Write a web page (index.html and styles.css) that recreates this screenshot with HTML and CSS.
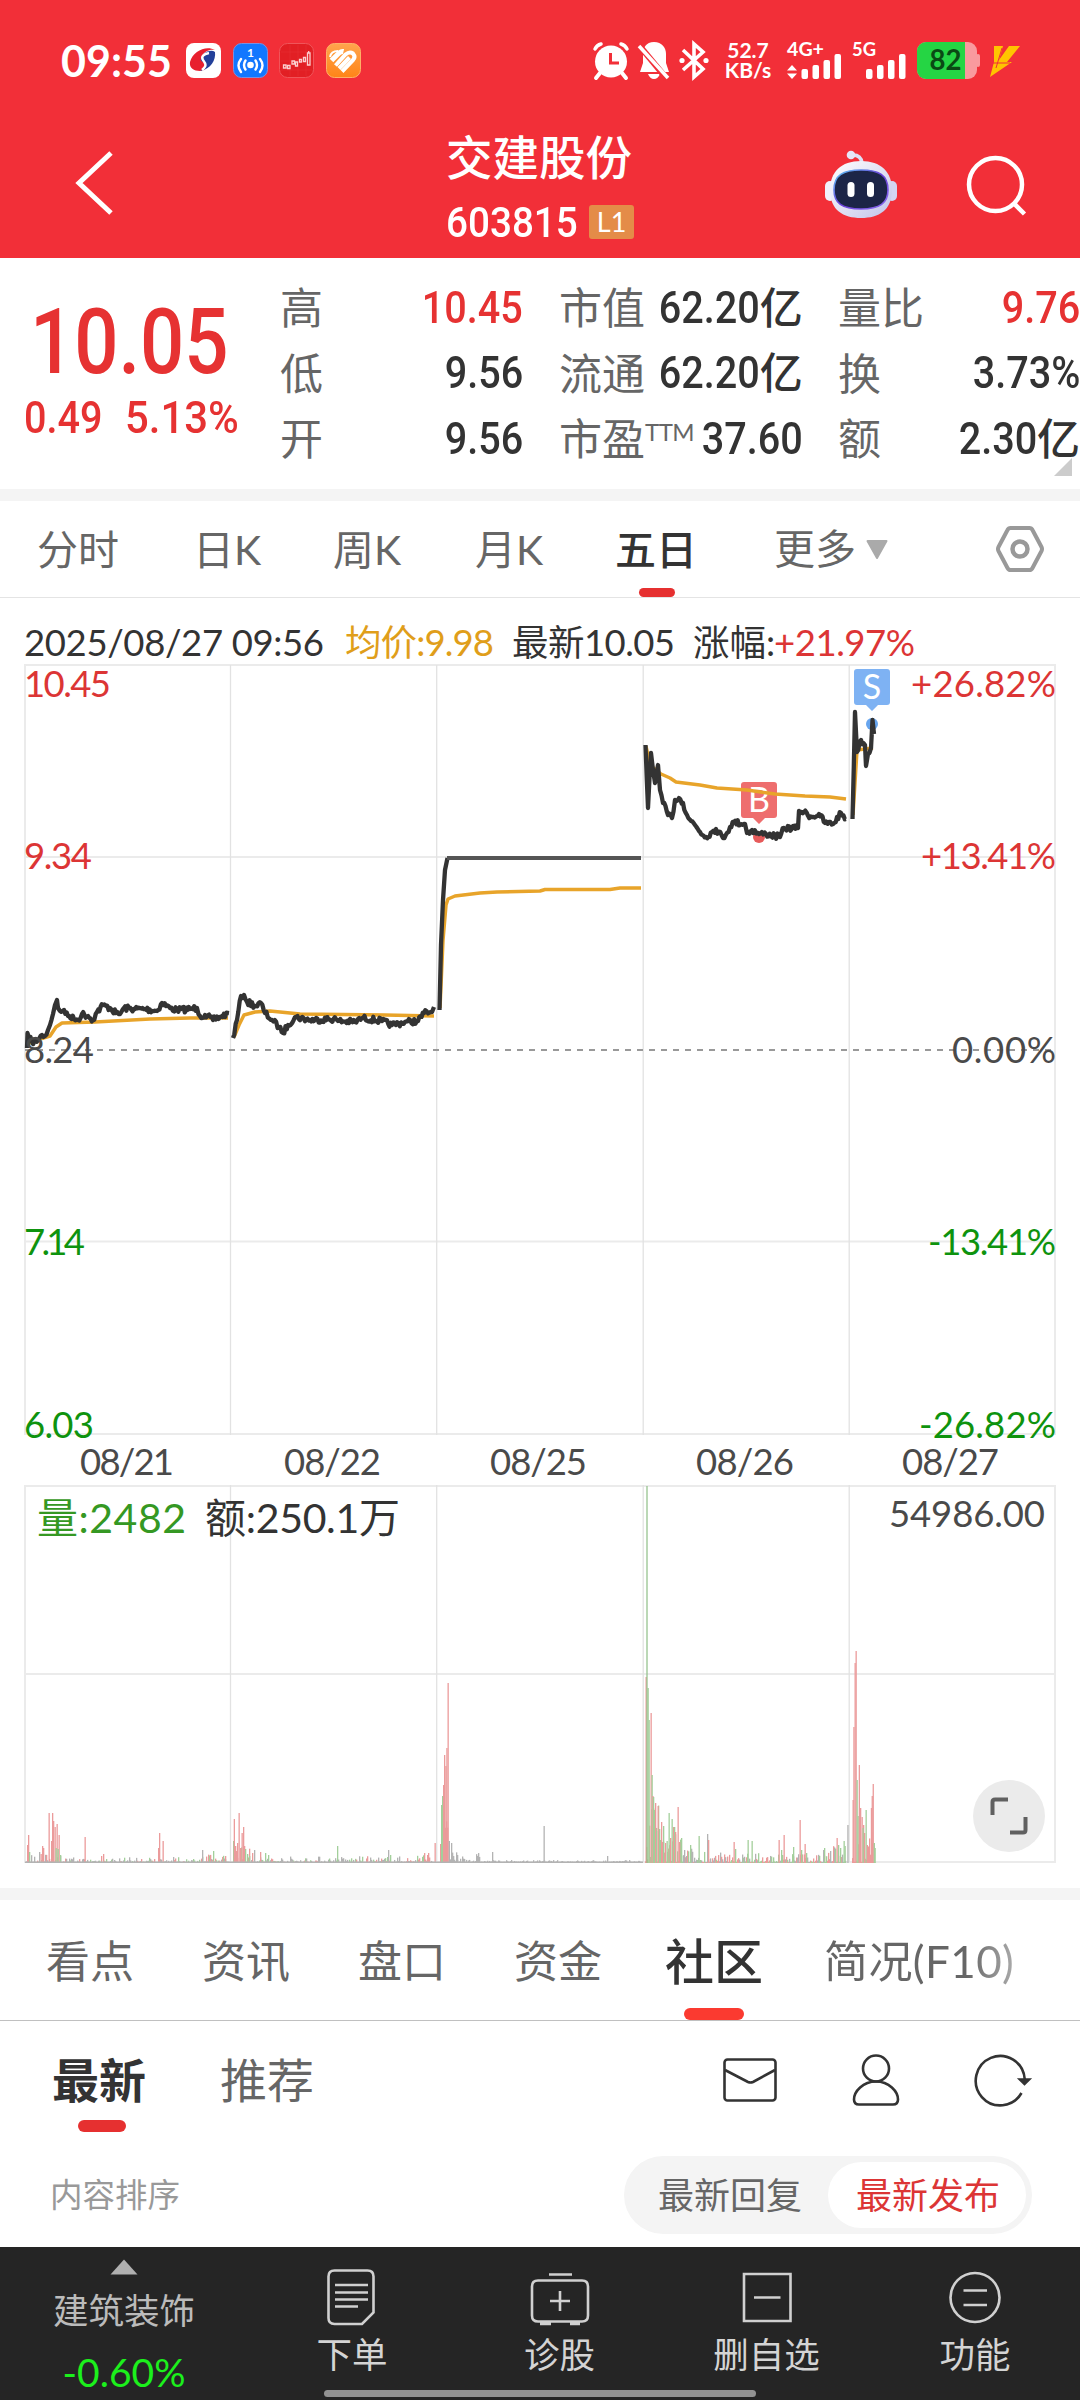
FILE: index.html
```html
<!DOCTYPE html>
<html lang="zh-CN">
<head>
<meta charset="utf-8">
<title>交建股份 603815</title>
<link rel="stylesheet" href="styles.css">
</head>
<body>
<div class="screen">
  <header class="top">
    <div class="status">
      <span class="clock">09:55</span>
      <div class="apps">
        <svg width="35" height="35" viewBox="0 0 35 35"><rect width="35" height="35" rx="8" fill="#fff"/><path d="M29 7C20 2 7 8 4 19c-1 6 4 9 10 9 6-1 8-4 6-7-2-3-6-4-4-8 2-4 7-7 13-6z" fill="#e8202e"/><path d="M15 15c2-6 10-9 14-6 1 8-4 17-15 19 5-4 7-5 4-8-2-2-4-2-3-5z" fill="#23409a"/><path d="M23 10c-6 1-8 4-6 7 3 4 4 6-1 10" fill="none" stroke="#fff" stroke-width="2.4"/></svg>
        <svg width="35" height="35" viewBox="0 0 35 35"><rect x=".5" y=".5" width="34" height="34" rx="8" fill="#1277ff" stroke="#7b8fe0"/><text x="17.5" y="13.500" text-anchor="middle" class="app-num">1</text><circle cx="17.500" cy="22" r="3.300" fill="#fff"/><path d="M12.500 17.500q-3 4.500 0 9M22.500 17.500q3 4.500 0 9M8 16q-5 6.500 0 13M27 16q5 6.500 0 13" fill="none" stroke="#fff" stroke-width="2.400" stroke-linecap="round"/></svg>
        <svg width="35" height="35" viewBox="0 0 35 35"><rect x=".5" y=".5" width="34" height="34" rx="8" fill="#e21f24" stroke="#f0555a"/><path d="M2 9h31M2 18h31M2 27h31M11 2v31M19 2v31M27 2v31" stroke="#e62c30" stroke-width=".8"/><path d="M4.500 22h2.500v3H4.500zM8.500 22.500h2.500v3H8.500zM13 18h2.500v3H13zM16.500 19h2v4h-2zM20.500 16.500h2v2.500h-2zM24.500 14.500h2v4h-2zM28.500 10h2.500v12h-2.500zM29.700 8v2" fill="none" stroke="#fbd0d0" stroke-width="1.300"/></svg>
        <svg width="35" height="35" viewBox="0 0 35 35"><defs><linearGradient id="og" x2="0" y2="1"><stop stop-color="#ffa54d"/><stop offset="1" stop-color="#ff8418"/></linearGradient></defs><rect x=".5" y=".5" width="34" height="34" rx="8" fill="url(#og)" stroke="#ffb066"/><g stroke="#fff" stroke-width="4" fill="none"><path d="M5.500 17.500 13 10q2.500-2 4.500-1.500" stroke-width="5"/><path d="M4 14q1-6 8-6" stroke-width="2"/><path d="M9.500 22.500 19.500 11.500q4-3.500 7.500-1 3 3.500 0 6.500L16 28.500"/><path d="M13 25.500 23.500 14.500"/></g></svg>
      </div>
      <div class="sys">
        <svg width="36" height="37" viewBox="0 0 36 37"><circle cx="18" cy="19.500" r="16" fill="#fff"/><path d="M2 7q2-4 6-5M34 7q-2-4-6-5" stroke="#fff" stroke-width="3.500" fill="none" stroke-linecap="round"/><path d="M7 31l-4 5M29 31l4 5" stroke="#fff" stroke-width="4" stroke-linecap="round"/><path d="M17.500 11v10h8.500" stroke="#f22f38" stroke-width="3" fill="none"/></svg>
        <svg width="32" height="37" viewBox="0 0 32 37"><path d="M16 0c8 0 12 6 12 12v9l3 9H2l3-9v-9C5 6 8 0 16 0zM10 32h12q-2 5-6 5t-6-5z" fill="#fff"/><path d="M0 2 29 37" stroke="#f22f38" stroke-width="6"/><path d="M1 4 30 36" stroke="#fff" stroke-width="3.500"/></svg>
        <svg width="30" height="37" viewBox="0 0 30 37"><path d="M4 8l20 19-9 8V2l9 8L4 28" fill="none" stroke="#fff" stroke-width="3.600"/><circle cx="3" cy="18.500" r="2.600" fill="#fff"/><circle cx="27" cy="18.500" r="2.600" fill="#fff"/></svg>
        <div class="speed"><span>52.7</span><span>KB/s</span></div>
        <svg class="cell" width="56" height="37" viewBox="0 0 56 37"><text x="0" y="14" textLength="37" lengthAdjust="spacingAndGlyphs">4G+</text><path d="M0 28.500l5-5.500 5 5.500zM0 31.500l5 5.500 5-5.500z" fill="#fff"/><g fill="#fff"><rect x="14.500" y="27" width="6.500" height="10" rx="2"/><rect x="25.500" y="23" width="6.500" height="14" rx="2"/><rect x="36.500" y="18" width="6.500" height="19" rx="2"/><rect x="47.500" y="12" width="6.500" height="25" rx="2"/></g></svg>
        <svg class="cell" width="56" height="37" viewBox="0 0 56 37"><text x="0" y="14" textLength="24" lengthAdjust="spacingAndGlyphs">5G</text><g fill="#fff"><rect x="14" y="27" width="6.500" height="10" rx="2"/><rect x="25" y="23" width="6.500" height="14" rx="2"/><rect x="36" y="18" width="6.500" height="19" rx="2"/><rect x="47" y="12" width="6.500" height="25" rx="2"/></g></svg>
        <svg class="cell" width="64" height="37" viewBox="0 0 64 37"><defs><clipPath id="bc"><rect width="60" height="37" rx="9"/></clipPath></defs><g clip-path="url(#bc)"><rect width="60" height="37" fill="#f99a9e"/><rect width="48" height="37" fill="#25d544"/></g><rect x="59" y="12" width="4" height="13" rx="2" fill="#f99a9e"/><text x="12.500" y="28" textLength="32" lengthAdjust="spacingAndGlyphs" class="batt">82</text></svg>
        <svg width="30" height="37" viewBox="0 0 30 37"><path d="M4 4h9L9 18l10-14h11L17 20h5L0 35 4 20z" fill="#ffc400"/><path d="M2 21h18M12 6l-6 20" stroke="#f22f38" stroke-width="1"/></svg>
      </div>
    </div>
    <div class="titlebar">
      <svg class="back" width="38" height="66" viewBox="0 0 38 66"><path d="M35 3 3 33l32 30" fill="none" stroke="#fff" stroke-width="5"/></svg>
      <div class="name">
        <h1>交建股份</h1>
        <div class="code"><span class="din">603815</span><em>L1</em></div>
      </div>
      <svg class="robot" width="74" height="70" viewBox="0 0 74 70"><defs><linearGradient id="rb" x2="1" y2="1"><stop stop-color="#fff"/><stop offset=".6" stop-color="#dcdcf2"/><stop offset="1" stop-color="#bfc3ea"/></linearGradient><linearGradient id="rs" x2="1" y2="1"><stop stop-color="#5cc8f5"/><stop offset=".5" stop-color="#6a3fd8"/><stop offset="1" stop-color="#8a6cf0"/></linearGradient></defs><path d="M27 5q10-1 11 8" fill="none" stroke="#dfe0f5" stroke-width="3.500"/><circle cx="27" cy="5" r="4.300" fill="#e6e6f8"/><rect x="1" y="31" width="10" height="20" rx="5" fill="#f1f1fb"/><rect x="63" y="31" width="10" height="20" rx="5" fill="#d3d5f2"/><path d="M37 11c20 0 31 11 31 29 0 20-13 28-31 28S6 60 6 40c0-18 11-29 31-29z" fill="url(#rb)"/><path d="M37 20c18 0 27 5 27 20 0 13-8 19-27 19S10 53 10 40c0-15 9-20 27-20z" fill="#1c2547" stroke="url(#rs)" stroke-width="1.600"/><rect x="23.500" y="32" width="7" height="15" rx="3.500" fill="#fff"/><rect x="43" y="32" width="7" height="15" rx="3.500" fill="#fff"/></svg>
      <svg class="search" width="62" height="62" viewBox="0 0 62 62"><circle cx="29.500" cy="29.500" r="26.500" fill="none" stroke="#fff" stroke-width="4.500"/><path d="M47.500 48 58.500 59" stroke="#fff" stroke-width="4.500"/></svg>
    </div>
  </header>

  <section class="quote">
    <div class="price">
      <div class="now"><span class="din">10.05</span></div>
      <div class="chg"><span class="din">0.49</span><span class="din">5.13%</span></div>
    </div>
    <dl class="stats s1">
      <dt>高</dt><dd class="red"><span class="din">10.45</span></dd>
      <dt>低</dt><dd><span class="din">9.56</span></dd>
      <dt>开</dt><dd><span class="din">9.56</span></dd>
    </dl>
    <dl class="stats s2">
      <dt>市值</dt><dd><span class="din">62.20</span>亿</dd>
      <dt>流通</dt><dd><span class="din">62.20</span>亿</dd>
      <dt>市盈<sup>TTM</sup></dt><dd><span class="din">37.60</span></dd>
    </dl>
    <dl class="stats s3">
      <dt>量比</dt><dd class="red"><span class="din">9.76</span></dd>
      <dt>换</dt><dd><span class="din">3.73%</span></dd>
      <dt>额</dt><dd><span class="din">2.30</span>亿</dd>
    </dl>
    <i class="corner"></i>
  </section>

  <nav class="periods">
    <span>分时</span><span>日K</span><span>周K</span><span>月K</span><span class="on">五日</span>
    <span class="more">更多<svg width="22" height="19" viewBox="0 0 22 19"><path d="M1.500 1h19L11 18z" fill="#aaa" stroke="#aaa" stroke-width="2" stroke-linejoin="round"/></svg></span>
    <svg width="50" height="48" viewBox="0 0 50 48"><path d="M15.500 3h19q2 0 3 2l9 17q1 2 0 4l-9 17q-1 2-3 2h-19q-2 0-3-2l-9-17q-1-2 0-4l9-17q1-2 3-2z" fill="none" stroke="#999" stroke-width="4"/><circle cx="25" cy="24" r="7.500" fill="none" stroke="#999" stroke-width="4.500"/></svg>
  </nav>

  <section class="chart">
    <svg id="chart" width="1080" height="1290" viewBox="0 598 1080 1290">
      <g class="info">
        <text x="24" y="656" textLength="300">2025/08/27 09:56</text>
        <text class="gold" x="345" y="656" textLength="149">均价:9.98</text>
        <text x="512" y="656" textLength="163">最新10.05</text>
        <text x="693" y="656" textLength="82">涨幅:</text>
        <text class="up" x="774" y="656" textLength="141">+21.97%</text>
      </g>
      <g fill="none" stroke="#ebebeb" stroke-width="2">
        <path d="M25 665H1055V1434H25zM25 857H1055M25 1241.500H1055M25 1486H1055V1862H25zM25 1674H1055"/>
        <path stroke="#e2e2e2" stroke-width="1.300" d="M230.500 665V1435M436.700 665V1435M643.200 665V1435M849.200 665V1435M230.500 1485V1862M436.700 1485V1862M643.200 1485V1862M849.200 1485V1862"/>
      </g>
      <path d="M25 1050H1055" stroke="#999" stroke-width="2" stroke-dasharray="6 6"/>
      <g id="bars"></g>
      <circle cx="872" cy="724" r="6" fill="#67a5ee"/>
      <circle cx="759" cy="837" r="6" fill="#e65a5a"/>
      <path d="M744 782h30q3 0 3 3v30q0 3-3 3h-9l-6 6-6-6h-9q-3 0-3-3v-30q0-3 3-3z" fill="#ee6e6e"/>
      <path d="M857 669h30q3 0 3 3v30q0 3-3 3h-9l-6 6-6-6h-9q-3 0-3-3v-30q0-3 3-3z" fill="#7eb2f3"/>
      <g class="flag"><text x="759" y="811.500">B</text><text x="872" y="698.500">S</text></g>
      <g id="avg" class="avg"></g>
      <g id="px" class="px"></g>
      <g class="axis">
        <g class="up"><text x="24" y="697" textLength="87">10.45</text><text x="24" y="869" textLength="68">9.34</text></g>
        <text x="24" y="1062.500" textLength="70">8.24</text>
        <g class="down"><text x="24" y="1254.500" textLength="61">7.14</text><text x="24" y="1438" textLength="70">6.03</text></g>
        <g class="up"><text x="911" y="697" textLength="145">+26.82%</text><text x="921" y="869" textLength="135">+13.41%</text></g>
        <text x="952" y="1062.500" textLength="104">0.00%</text>
        <g class="down"><text x="928" y="1254.500" textLength="128">-13.41%</text><text x="919" y="1438" textLength="137">-26.82%</text></g>
        <text x="80" y="1475" textLength="94">08/21</text><text x="284" y="1475" textLength="97">08/22</text><text x="490" y="1475" textLength="97">08/25</text><text x="696" y="1475" textLength="98">08/26</text><text x="902" y="1475" textLength="97">08/27</text>
        <text x="889" y="1527" textLength="156">54986.00</text>
      </g>
      <g class="vol"><text class="grn" x="37" y="1533" textLength="149">量:2482</text><text x="205" y="1533" textLength="195">额:250.1万</text></g>
      <circle cx="1009" cy="1816" r="36" fill="#ebebeb"/>
      <path d="M992.500 1815v-13q0-2.500 2.500-2.500h13M1025.500 1817v13q0 2.500-2.500 2.500h-13" fill="none" stroke="#606060" stroke-width="4"/>
    </svg>
  </section>

  <nav class="sections">
    <span>看点</span><span>资讯</span><span>盘口</span><span>资金</span><span class="on">社区</span><span class="fade">简况(F10)</span>
  </nav>

  <section class="feed">
    <div class="feed-head">
      <span class="on">最新</span><span>推荐</span>
      <div class="tools">
        <svg width="54" height="52" viewBox="0 0 54 52"><rect x="1.500" y="5.500" width="51" height="41" rx="3"/><path d="M2 16 25 28q2.500 1 5 0L52 16"/></svg>
        <svg width="48" height="52" viewBox="0 0 48 52"><circle cx="24" cy="14.500" r="13"/><path d="M24 27.500c-13 0-22 10-22 18 0 4 2 5 5 5h34c3 0 5-1 5-5 0-8-9-18-22-18z"/></svg>
        <svg width="56" height="52" viewBox="0 0 56 52"><path d="M46.500 39A24.500 24.700 0 1 1 49.700 25"/><path d="M45 25.500h9l-4.500 4.500z" fill="#333"/></svg>
      </div>
    </div>
    <div class="sort">
      <span class="label">内容排序</span>
      <div class="seg"><span>最新回复</span><span class="on">最新发布</span></div>
    </div>
  </section>

  <footer class="bar">
    <div class="industry"><svg width="28" height="16" viewBox="0 0 28 16"><path d="M14 .5 27.500 15.500H.5z" fill="#b0b0b0"/></svg><span>建筑装饰</span><b>-0.60%</b></div>
    <div class="item"><svg width="60" height="58" viewBox="0 0 60 58"><path d="M12.500 2.500h33q6 0 6 6v36L40 56H12.500q-6 0-6-6V8.500q0-6 6-6z" /><path d="M13 17h33M13 24.500h33M13 31.500h33M13 38.500h23"/></svg><span>下单</span></div>
    <div class="item"><svg width="60" height="58" viewBox="0 0 60 58"><path d="M8 12.500h44q6 0 6 6v29q0 6-6 6H8q-6 0-6-6v-29q0-6 6-6zM19 6.500h23M30 23v20M20 33h20"/><path d="M10 55.500h11M40 55.500h10" stroke-width="3.500"/></svg><span>诊股</span></div>
    <div class="item"><svg width="60" height="58" viewBox="0 0 60 58"><path d="M7 6h46.500v47H7zM17 29.500h26.500"/></svg><span>删自选</span></div>
    <div class="item"><svg width="60" height="58" viewBox="0 0 60 58"><circle cx="30" cy="29.500" r="24.500"/><path d="M18.500 22.500H42M18.500 37H42"/></svg><span>功能</span></div>
    <i class="home"></i>
  </footer>
</div>
<script src="chart.js"></script>
</body>
</html>
```
FILE: styles.css
```css
* { box-sizing: border-box; }
body, h1, dl, dd, dt { margin: 0; }
body { width: 1080px; background: #fff; color: #333; font-family: Lato, "Noto Sans CJK SC", sans-serif; }
svg { display: block; flex: none; overflow: visible; }
span, dt, dd, text { white-space: nowrap; }
.screen { width: 1080px; height: 2400px; display: flex; flex-direction: column; overflow: hidden; }
.din { display: inline-block; font-family: Roboto, sans-serif; font-weight: 500; transform: scaleX(.88); transform-origin: left; }
.red { color: #e63232; }

.top { height: 258px; background: #f22f38; color: #fff; display: flex; flex-direction: column; }
.status { height: 120px; padding: 0 60px; display: flex; align-items: center; }
.clock { width: 126px; font-size: 43px; font-weight: 700; line-height: 35px; padding-left: 1px; }
.apps { display: flex; gap: 11.500px; }
.app-num { fill: #fff; font-size: 12px; font-weight: 700; }
.sys { margin-left: auto; display: flex; align-items: center; gap: 9px; }
.speed { width: 48px; margin: 0 6px 0 6px; display: flex; flex-direction: column; align-items: center; font-size: 21px; line-height: 20px; font-weight: 700; }
.cell text { fill: #fff; font-size: 18px; font-weight: 700; }
.cell .batt { fill: #0a4a14; font-size: 28px; }
.titlebar { height: 138px; position: relative; display: flex; justify-content: center; }
.back { position: absolute; left: 76px; top: 30px; }
.robot { position: absolute; left: 824px; top: 30px; }
.search { position: absolute; left: 966px; top: 35px; }
.name { width: 188px; padding-top: 9px; }
h1 { font-size: 46.500px; font-weight: 500; line-height: 56px; }
.code { display: flex; align-items: center; height: 36px; margin-top: 19px; font-size: 42px; }
.code .din { width: 144px; transform: scaleX(.92); }
.code em { width: 45px; height: 34px; border-radius: 3px; background: #e48c48; font-style: normal; font-size: 27px; line-height: 34px; text-align: center; }

.quote { height: 231px; position: relative; display: flex; line-height: 66px; font-size: 43px; }
.price { width: 280px; padding: 30px 0 0 24px; color: #e63232; }
.now { font-size: 90px; line-height: 100px; padding-left: 6px; }
.now .din { transform: scaleX(.865); }
.chg { font-size: 45px; line-height: 50px; display: flex; }
.chg .din:first-child { width: 101px; }
.chg .din:last-child { transform: scaleX(.93); }
.stats { display: grid; grid-template-columns: auto auto; grid-template-rows: repeat(3, 65.500px); justify-content: space-between; padding-top: 17px; }
.stats dt { color: #666; }
.stats dd { display: flex; justify-content: flex-end; align-items: center; font-weight: 500; }
.stats .din { font-size: 45px; transform-origin: right; }
.s1 { width: 243px; }
.s2 { width: 242px; margin-left: 36px; }
.s3 { width: 242px; margin-left: 37px; }
.stats sup { display: inline-block; width: 0; font-size: 24px; line-height: 0; vertical-align: 14px; letter-spacing: -.5px; }
.corner { position: absolute; right: 8px; top: 200px; border: 9px solid #ccc; border-top-color: transparent; border-left-color: transparent; }

.periods { height: 109px; border-top: 12px solid #f4f4f4; border-bottom: 1px solid #e4e4e4; padding-left: 37px; display: grid; grid-template-columns: 156px 140px 142px 140px 159px 221px 50px; align-items: center; font-size: 41px; color: #666; }
.periods span { position: relative; line-height: 98px; height: 96px; }
.periods .on { color: #333; font-weight: 500; }
.periods .on::after, .sections .on::after, .feed-head .on::after { content: ""; position: absolute; border-radius: 6px; background: #e63030; }
.periods .on::after { left: 24px; bottom: 0; width: 36px; height: 9px; }
.periods .more { display: flex; align-items: center; gap: 10px; }

.chart { height: 1290px; }
.chart text { fill: #333; }
.info text, .axis text { font-size: 36.500px; }
.axis text { fill: #4a4a4a; }
.vol text { font-size: 41px; }
.chart .gold { fill: #e09e1a; }
.chart .info .up, .chart .up text { fill: #dc3535; }
.chart .down text { fill: #0e930e; }
.chart .grn { fill: #359823; }
.chart .flag text { fill: #fff; font-size: 34px; text-anchor: middle; }
.px, .avg { fill: none; stroke: #333; stroke-width: 4.300; stroke-linejoin: round; }
.px .limit { stroke: #555; stroke-width: 3.800; }
.avg { stroke: #e8a42a; stroke-width: 3.500; }

.sections { height: 133px; border-top: 12px solid #f4f4f4; border-bottom: 1px solid #c0c0c0; padding-left: 46px; display: grid; grid-template-columns: 156px 156px 156px 151px 159px auto; font-size: 44px; line-height: 122px; color: #666; }
.sections span { position: relative; height: 120px; }
.sections .on { color: #333; font-size: 49px; font-weight: 500; }
.sections .on::after { left: 19px; bottom: 0; width: 60px; height: 12px; background: #fb3a30; }
.sections .fade { justify-self: start; letter-spacing: .4px; background: linear-gradient(90deg, #666 75%, #aaa); -webkit-background-clip: text; color: transparent; }

.feed { height: 226px; }
.feed-head { height: 118px; padding: 0 49px 0 52px; display: flex; align-items: center; font-size: 47px; color: #666; }
.feed-head > span { position: relative; width: 168px; line-height: 118px; }
.feed-head .on { color: #333; font-weight: 700; }
.feed-head .on::after { left: 26px; bottom: 7px; width: 48px; height: 12px; }
.tools { margin-left: auto; display: flex; gap: 75px; fill: none; stroke: #333; stroke-width: 2.600; }
.sort { height: 108px; padding: 17px 48px 0 50px; display: flex; justify-content: space-between; align-items: flex-start; }
.label { font-size: 32.500px; line-height: 78px; color: #999; }
.seg { width: 408px; height: 78px; border-radius: 39px; background: #f4f4f4; padding: 6px; display: flex; justify-content: space-between; font-size: 36px; line-height: 67px; color: #666; }
.seg span { padding-left: 28px; }
.seg .on { width: 198px; height: 66px; border-radius: 33px; background: #fff; color: #dc3535; }

.bar { height: 153px; background: #252525; position: relative; display: grid; grid-template-columns: 248px 208px 207px 207px 210px; color: #d4d4d4; font-size: 35.500px; }
.industry { display: flex; flex-direction: column; align-items: center; padding-top: 12px; color: #bbb; }
.industry span { line-height: 48px; margin-top: 12px; }
.industry b { color: #1cf01c; font-weight: 400; font-size: 39px; line-height: 46px; margin-top: 14px; }
.item { display: flex; flex-direction: column; align-items: center; padding-top: 21px; }
.item svg { fill: none; stroke: #d0d0d0; stroke-width: 2.600; }
.item span { line-height: 48px; margin-top: 5px; }
.home { position: absolute; left: 324px; top: 143px; width: 432px; height: 7px; border-radius: 4px; background: #929292; }
```
FILE: chart.js
```js
const NS = 'http://www.w3.org/2000/svg';
let seed = 7;
const rnd = () => (seed = (seed * 16807) % 2147483647) / 2147483647;

const prices = [
  '27,1048 27.5,1033 29,1038 32,1042 38,1040 42,1035 45,1036 48,1030 50,1025 53,1014 55,1005 57,1000 58,1008 60,1011 64,1010 68,1016 74,1019 78,1020 82,1014 88,1016 93,1020 97,1012 103,1005 110,1008 116,1013 120,1014 124,1008 135,1009 145,1009 157,1011 162,1003 170,1008 177,1010 190,1009 197,1008 200,1016 205,1015 213,1020 220,1017 229,1013',
  '233,1038 237,1020 241,996 244,995 247,1002 256,1006 261,1003 265,1013 272,1020 279,1027 283,1033 288,1025 295,1017 310,1020 336,1019 338,1021 355,1022 362,1018 382,1021 392,1025 405,1022 418,1021 424,1013 432,1012 434,1007',
  '439.5,1010 441,945 443,900 445,870 447.5,858',
  '645.5,745 648,808 651,753 653,770 655,783 658,765 660,790 663,803 668,815 672,818 675,800 679,798 683,803 687,815 691,821 695,825 700,832 706,837 712,832 716,829 723,838 730,827 734,822 745,824 747,833 752,830 759,834 766,834 780,837 784,828 798,828 799,811 804,812 812,817 819,814 825,823 833,824 841,813 846,819',
  '852.5,819 855,712 857,752 861,740 865,745 866,766 868,754 871,748 872.5,720 874,734'
];
const averages = [
  '27,1044 40,1039 50,1036 56,1027 62,1023 95,1022 150,1019 190,1018 228,1018',
  '234,1037 239,1025 244,1015 255,1012 270,1011 300,1014 385,1015 434,1016',
  '440,1008 443,940 446,905 448,899 455,896 480,893 497,892 540,891 545,889.5 610,889.5 620,888 641,888',
  '646,746 650,765 661,774 670,778 676,782 700,785 717,788 747,790 775,794 805,796 830,797 846,799',
  '853,815 857,750 873,748'
];

function line(host, pts, cls) {
  const el = document.createElementNS(NS, 'polyline');
  el.setAttribute('points', pts);
  if (cls) el.setAttribute('class', cls);
  document.getElementById(host).appendChild(el);
}

// Minute ticks between the key points
function minutes(str) {
  const p = str.split(' ').map(s => s.split(',').map(Number));
  const out = [p[0]];
  for (let i = 1; i < p.length; i++) {
    const [x0, y0] = p[i - 1], [x1, y1] = p[i];
    const n = Math.floor((x1 - x0) / 1.2);
    for (let k = 1; k < n; k++) {
      const t = k / n;
      out.push([x0 + (x1 - x0) * t, y0 + (y1 - y0) * t + (rnd() - .5) * 6]);
    }
    out.push(p[i]);
  }
  return out.map(q => q[0].toFixed(1) + ',' + q[1].toFixed(1)).join(' ');
}

averages.forEach(s => line('avg', s));
prices.forEach((s, i) => line('px', i === 2 ? s : minutes(s)));
line('px', '447,858 641,858', 'limit');

// Volume bars: x, height, tone (r, g, k)
const R = '#eb9b9b', G = '#a3cf9b', K = '#b3b3b3';
const tone = { r: R, g: G, k: K };
const bars = '27,18,r 28,28,r 29,11,g 39,11,k 40.5,9,r 42,17,r 43,15,r 48.5,50,r 51,22,r 52,50,r 53,42,r 54.500,36,r 56.500,39,r 58.500,28,r 55.500,15,g 57.500,14,g 60,8,g 84.500,26,r 101,7,r 103,9,r 159,30,r 158,15,r 162.500,22,r 202,13,k 213,12,g 225,7,r ' +
 '233,22,g 233.700,44,r 235,17,r 237,20,r 238.500,50,r 240,15,r 241.500,30,r 243,36,r 244,17,r 236,12,r 245,14,g 247,9,g 249,7,g 252,10,r 254,13,k 260,11,r 265,10,g 268,8,g 337,17,g 388,13,k 390,8,g 427,8,r 434.500,20,r ' +
 '440,19,r 441,58,g 442,67,g 443,78,r 444,108,r 445.300,97,r 446.300,115,r 447.500,180,r 448.700,22,k 451,20,k 457,8,k 492,11,k 543.500,37,k 607,7,k ' +
 '645.500,186,r 647.500,175,g 648.500,143,g 650.500,150,r 651.500,88,g 652.300,67,r 653,66,g 654,53,g 655,60,r 656,32,g 657.500,57,r 659,34,g 660,23,g 661,41,r 663,37,g 665,20,r 666.500,22,g 668.500,50,g 670,25,r 671.500,44,g 673,36,r 674,36,g 675,31,r 677.500,56,r 679,21,r 681,25,g 684,13,k 690,18,g 698.500,27,g 707,29,k 708,23,r 733.500,21,r 735,14,g 747.500,23,g 751.500,22,g 778.500,23,r 781,13,g 783.500,28,r 793,16,g 799.500,43,r 801,13,g 804.500,19,r 806,10,g 824,15,g 830,12,k 836.500,25,r 838,18,g 840,15,g 843.500,22,g 844.500,17,g 847.300,38,k ' +
 '852.500,63,r 853.300,136,r 854.500,200,r 855.500,212,r 856.500,83,g 857.500,47,g 858.700,98,r 860,55,r 861.500,46,r 863,38,r 862.500,35,g 864,30,r 865.500,53,g 866.700,18,r 868,12,r 869,9,r 870,8,r 870.800,55,r 871.600,67,r 872.600,79,r 873.700,20,g 874.500,15,g';
function bar(x, h, c, w) {
  const el = document.createElementNS(NS, 'rect');
  el.setAttribute('x', x); el.setAttribute('y', 1863 - h);
  el.setAttribute('width', w || 1.3); el.setAttribute('height', h);
  el.setAttribute('fill', c);
  document.getElementById('bars').appendChild(el);
}
function filler(a, b, max, mix) {
  for (let x = a; x < b; x += 1) {
    const v = rnd();
    bar(x, 1 + max * v * v * v, mix[Math.floor(rnd() * mix.length)]);
  }
}
filler(26, 66, 8, [R, G, R, K]);
filler(66, 195, 5, [R, G, K, K]);
filler(195, 229, 8, [G, K, R]);
filler(233, 250, 16, [R, G]);
filler(250, 415, 6, [G, R, K, K]);
filler(415, 432, 12, [G, R, K]);
filler(440, 448, 50, [R]);
filler(448, 480, 10, [K]);
filler(480, 642, 2, [K]);
filler(645, 660, 60, [G, R]);
filler(660, 683, 34, [G, R]);
filler(683, 712, 15, [G, R, K]);
filler(712, 820, 10, [R, G, K]);
filler(820, 846, 17, [G, R, K]);
filler(852, 875, 34, [R]);
bars.split(' ').forEach(s => { const [x, h, c] = s.split(','); bar(+x, +h, tone[c]); });
bar(646.4, 377, '#8fbf87', 1.2);
bar(25, 1.5, K, 618);
```
